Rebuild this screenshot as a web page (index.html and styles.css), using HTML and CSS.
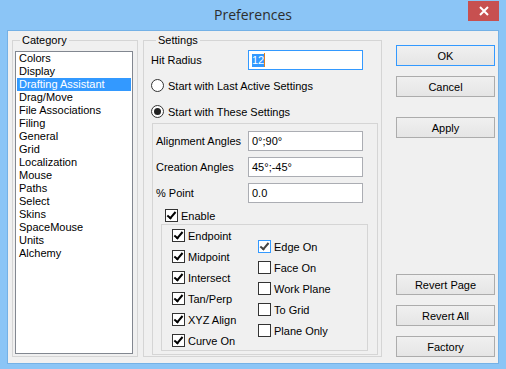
FILE: index.html
```html
<!DOCTYPE html>
<html>
<head>
<meta charset="utf-8">
<link rel="stylesheet" href="styles.css">
</head>
<body>
<div class="window">
  <div class="titlebar">
    <span class="title">Preferences</span>
    <span class="close"><svg width="10" height="10" viewBox="0 0 10 10"><path d="M1 1 L9 9 M9 1 L1 9" stroke="#fff" stroke-width="2"/></svg></span>
  </div>
  <div class="client">
    <fieldset class="group cat">
      <legend>Category</legend>
      <ul class="list">
        <li>Colors</li>
        <li>Display</li>
        <li class="sel">Drafting Assistant</li>
        <li>Drag/Move</li>
        <li>File Associations</li>
        <li>Filing</li>
        <li>General</li>
        <li>Grid</li>
        <li>Localization</li>
        <li>Mouse</li>
        <li>Paths</li>
        <li>Select</li>
        <li>Skins</li>
        <li>SpaceMouse</li>
        <li>Units</li>
        <li>Alchemy</li>
      </ul>
    </fieldset>
    <fieldset class="group settings">
      <legend>Settings</legend>
      <div class="field hit"><span class="lbl">Hit Radius</span><span class="input focus"><span class="seltext">12</span><span class="caret"></span></span></div>
      <div class="opt r1"><span class="radio"></span><span>Start with Last Active Settings</span></div>
      <div class="opt r2"><span class="radio on"></span><span>Start with These Settings</span></div>
      <div class="box outer">
        <div class="field f1"><span class="lbl">Alignment Angles</span><span class="input">0°;90°</span></div>
        <div class="field f2"><span class="lbl">Creation Angles</span><span class="input">45°;-45°</span></div>
        <div class="field f2"><span class="lbl">% Point</span><span class="input">0.0</span></div>
        <div class="opt enable"><span class="cb checked"></span><span>Enable</span></div>
        <div class="box inner">
          <div class="col c1">
            <div class="opt ci"><span class="cb checked"></span><span>Endpoint</span></div>
            <div class="opt ci"><span class="cb checked"></span><span>Midpoint</span></div>
            <div class="opt ci"><span class="cb checked"></span><span>Intersect</span></div>
            <div class="opt ci"><span class="cb checked"></span><span>Tan/Perp</span></div>
            <div class="opt ci"><span class="cb checked"></span><span>XYZ Align</span></div>
            <div class="opt ci"><span class="cb checked"></span><span>Curve On</span></div>
          </div>
          <div class="col c2">
            <div class="opt ci"><span class="cb checked focus"></span><span>Edge On</span></div>
            <div class="opt ci"><span class="cb"></span><span>Face On</span></div>
            <div class="opt ci"><span class="cb"></span><span>Work Plane</span></div>
            <div class="opt ci"><span class="cb"></span><span>To Grid</span></div>
            <div class="opt ci"><span class="cb"></span><span>Plane Only</span></div>
          </div>
        </div>
      </div>
    </fieldset>
    <div class="buttons">
      <div class="btn default">OK</div>
      <div class="btn">Cancel</div>
      <div class="btn apply">Apply</div>
      <div class="spacer"></div>
      <div class="btn">Revert Page</div>
      <div class="btn">Revert All</div>
      <div class="btn">Factory</div>
    </div>
  </div>
</div>
</body>
</html>
```
FILE: styles.css
```css
* { box-sizing: border-box; }
html, body { margin: 0; padding: 0; }
body {
  width: 506px;
  height: 369px;
  overflow: hidden;
  font-family: "Liberation Sans", Arial, sans-serif;
  font-size: 11px;
  color: #000;
}
.window {
  width: 506px;
  height: 369px;
  background: #8bc5f6;
  display: flex;
  flex-direction: column;
}
.titlebar {
  height: 30px;
  display: grid;
  grid-template-columns: 1fr auto 1fr;
}
.title {
  grid-column: 2;
  font-family: "Open Sans", "Noto Sans", sans-serif;
  font-size: 14px;
  line-height: 30px;
  color: #2d2d2d;
}
.close {
  grid-column: 3;
  justify-self: end;
  align-self: start;
  margin: 1px 7px 0 0;
  width: 31px;
  height: 20px;
  background: #c75050;
  display: flex;
  align-items: center;
  justify-content: center;
}
.client {
  margin: 0 7px 0 7px;
  height: 334px;
  border: 1px solid #74b1e6;
  background: #f0f0f0;
  display: flex;
  padding: 3px 0 0 4px;
}
.group {
  margin: 0;
  border: 1px solid #d5d5d5;
  height: 323px;
  min-width: 0;
}
.group legend {
  padding: 0 2px;
  margin-left: 5px;
  line-height: 13px;
}
.cat {
  width: 126px;
  padding: 4px 0 0 2px;
}
.list {
  list-style: none;
  margin: 0;
  padding: 0;
  width: 118px;
  height: 303px;
  border: 1px solid #828790;
  background: #fff;
}
.list li {
  line-height: 13px;
  height: 13px;
  margin: 0 1px 0 1px;
  padding-left: 2px;
  white-space: nowrap;
}
.list li.sel {
  background: #3399ff;
  color: #fff;
}
.settings {
  width: 239px;
  margin-left: 5px;
  padding: 3px 0 0 7px;
}
.field {
  display: flex;
  align-items: center;
  height: 20px;
}
.lbl { width: 97px; white-space: nowrap; }
.input {
  width: 115px;
  height: 20px;
  border: 1px solid #abadb3;
  background: #fff;
  padding-left: 3px;
  display: flex;
  align-items: center;
  white-space: nowrap;
}
.input.focus { border-color: #3399ff; }
.seltext { background: #3399ff; color: #fff; line-height: 13px; }
.caret { width: 1px; height: 14px; background: #e0801e; }
.opt {
  display: flex;
  align-items: center;
  height: 13px;
  white-space: nowrap;
  gap: 4px;
}
.r1 { margin-top: 9px; }
.r2 { margin-top: 13px; }
.radio {
  width: 13px;
  height: 13px;
  border: 1px solid #333;
  border-radius: 50%;
  background: #fff;
  display: flex;
  align-items: center;
  justify-content: center;
  flex: none;
}
.radio.on::after {
  content: "";
  width: 7px;
  height: 7px;
  border-radius: 50%;
  background: #222;
}
.box {
  border: 1px solid #d5d5d5;
}
.outer {
  margin: 5px 0 0 1px;
  width: 226px;
  height: 232px;
  padding: 7px 0 0 3px;
}
.outer .lbl { width: 92px; }
.f2 { margin-top: 6px; }
.enable { margin: 6px 0 0 9px; gap: 3px; }
.inner {
  margin: 2px 0 0 5px;
  width: 207px;
  height: 127px;
  display: flex;
  padding: 4px 0 0 10px;
}
.c1 { width: 86px; }
.c2 { margin-top: 11px; }
.ci { margin-bottom: 8px; gap: 3px; }
.cb {
  width: 13px;
  height: 13px;
  border: 1px solid #333;
  background: #fff;
  flex: none;
  position: relative;
}
.cb.checked::after {
  content: "";
  position: absolute;
  left: 3px;
  top: 0px;
  width: 3px;
  height: 7px;
  border-right: 2px solid #000;
  border-bottom: 2px solid #000;
  transform: rotate(40deg);
}
.cb.focus { border-color: #3399ff; }
.cb.focus::after { border-color: #444; }
.buttons {
  margin-left: 14px;
  width: 99px;
  padding: 11px 0 6px 0;
  display: flex;
  flex-direction: column;
  gap: 10px;
}
.btn {
  height: 21px;
  border: 1px solid #acacac;
  background: linear-gradient(#f0f0f0, #e5e5e5);
  display: flex;
  align-items: center;
  justify-content: center;
}
.btn.default { border-color: #3399ff; }
.btn.apply { margin-top: 10px; }
.spacer { flex: 1; }
```
